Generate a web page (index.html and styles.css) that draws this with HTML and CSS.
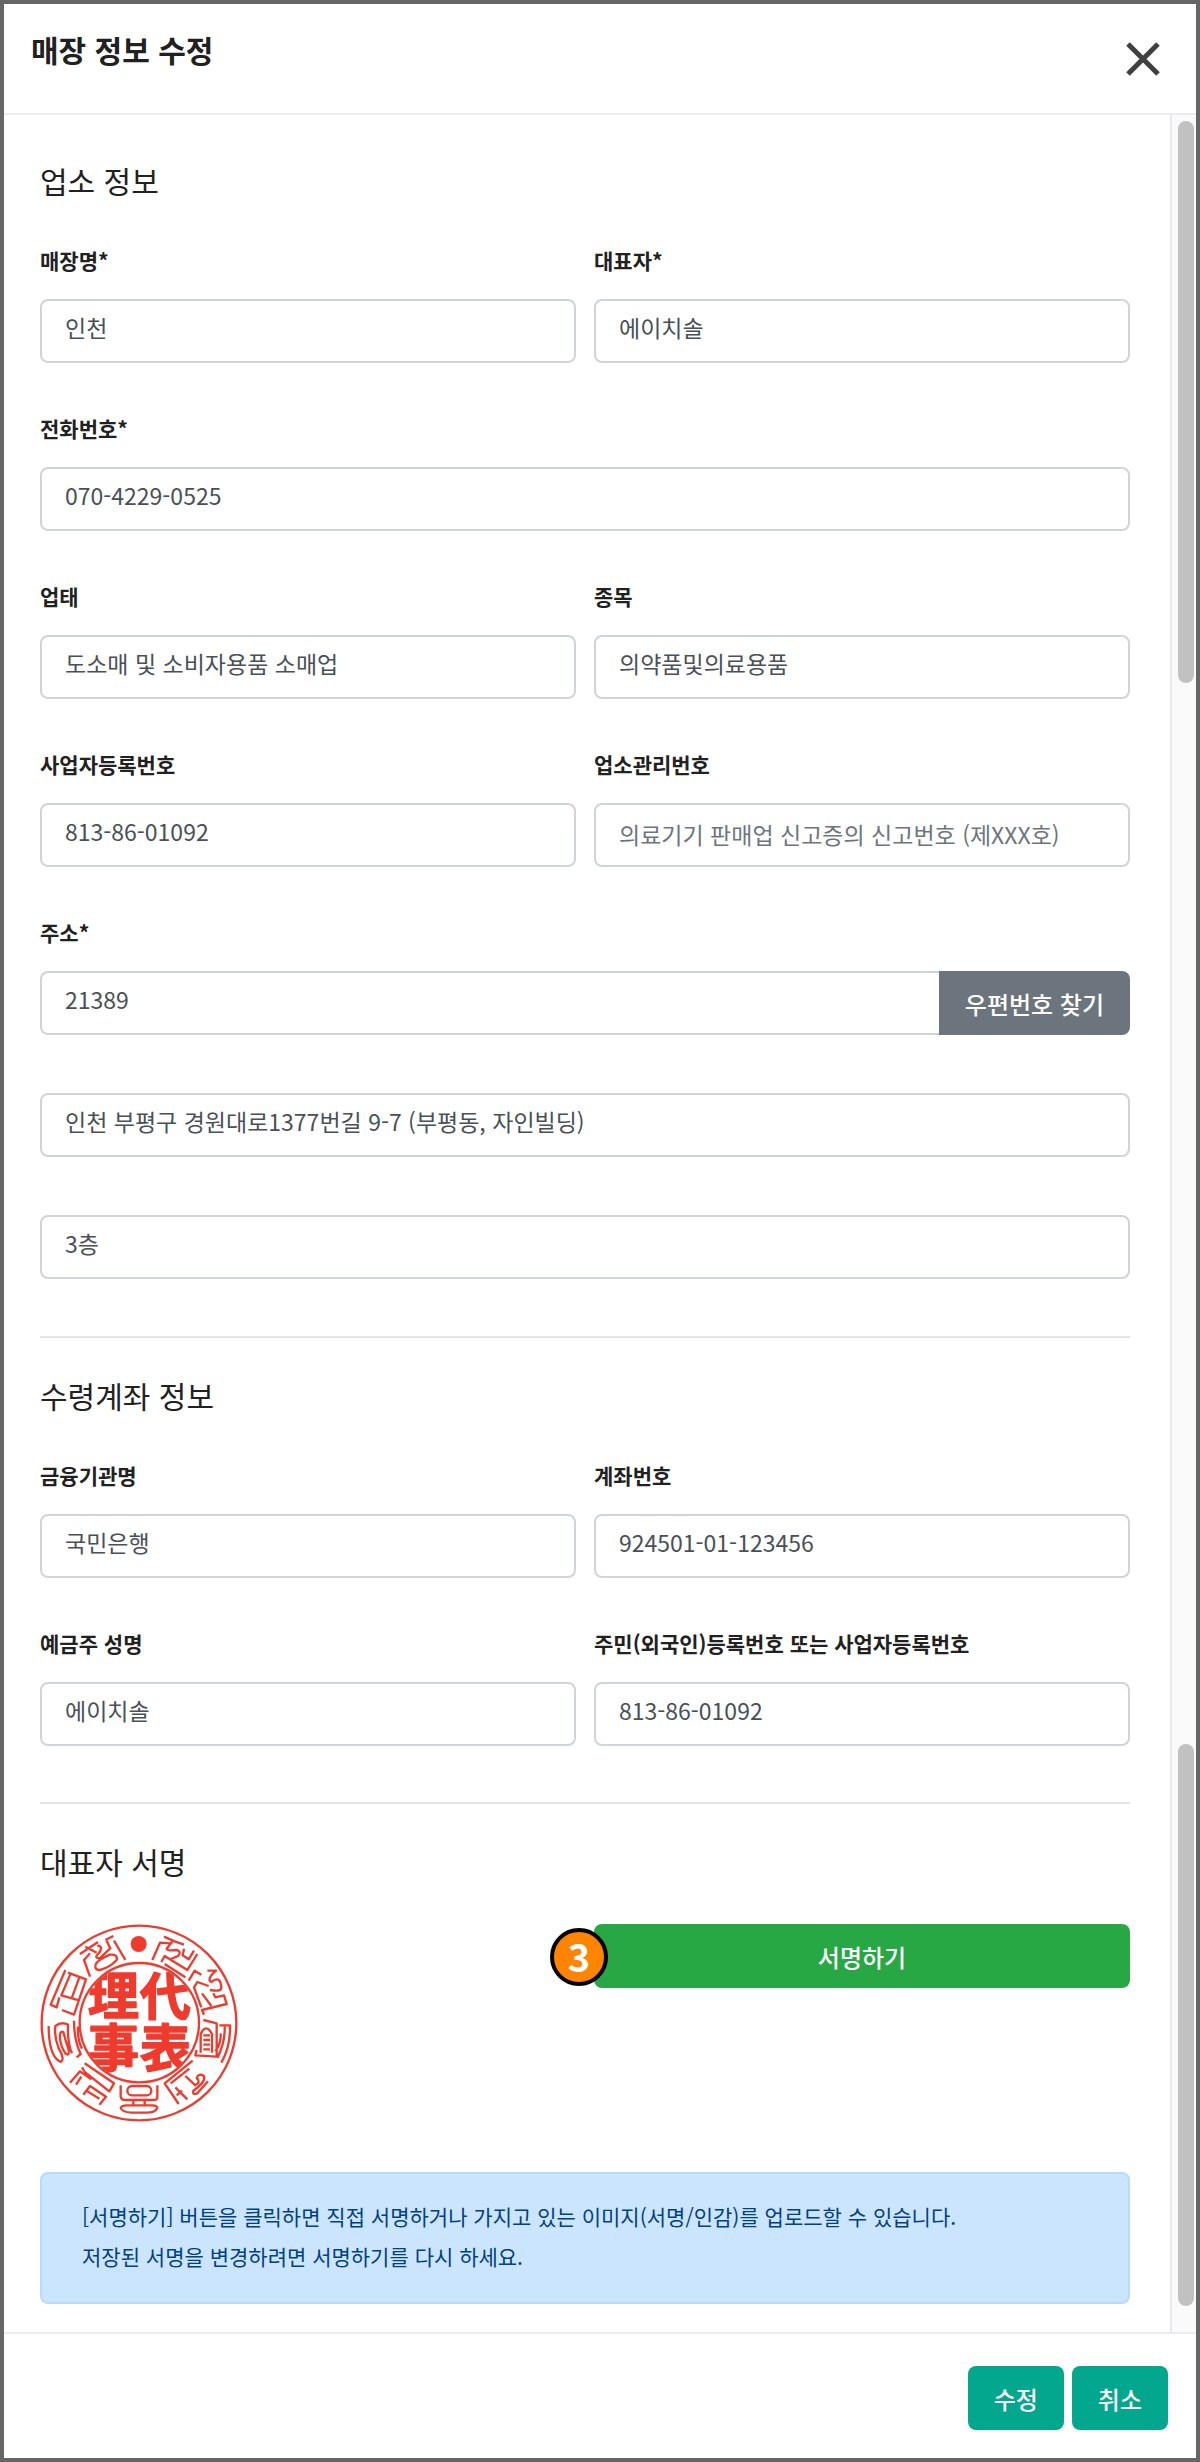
FILE: index.html
```html
<!DOCTYPE html>
<html lang="ko">
<head>
    <meta charset="UTF-8">
    <meta name="viewport" content="width=device-width, initial-scale=1.0">
    <title>매장 정보 수정</title>
    <link rel="stylesheet" href="styles.css">
</head>
<body>
    <form class="modal">
        <header class="modal-header">
            <h1>매장 정보 수정</h1>
            <button type="button" class="close" aria-label="닫기">
                <svg viewBox="0 0 34 34" width="34" height="34"><path d="M2 2L32 32M32 2L2 32"/></svg>
            </button>
        </header>

        <div class="modal-body">
            <div class="content">
                <section>
                    <h2>업소 정보</h2>
                    <div class="row">
                        <div class="field">
                            <label for="storeName">매장명*</label>
                            <input type="text" id="storeName" value="인천">
                        </div>
                        <div class="field">
                            <label for="owner">대표자*</label>
                            <input type="text" id="owner" value="에이치솔">
                        </div>
                    </div>
                    <div class="row">
                        <div class="field">
                            <label for="phone">전화번호*</label>
                            <input type="text" id="phone" value="070-4229-0525">
                        </div>
                    </div>
                    <div class="row">
                        <div class="field">
                            <label for="bizType">업태</label>
                            <input type="text" id="bizType" value="도소매 및 소비자용품 소매업">
                        </div>
                        <div class="field">
                            <label for="bizItem">종목</label>
                            <input type="text" id="bizItem" value="의약품및의료용품">
                        </div>
                    </div>
                    <div class="row">
                        <div class="field">
                            <label for="bizNo">사업자등록번호</label>
                            <input type="text" id="bizNo" value="813-86-01092">
                        </div>
                        <div class="field">
                            <label for="manageNo">업소관리번호</label>
                            <input type="text" id="manageNo" placeholder="의료기기 판매업 신고증의 신고번호 (제XXX호)">
                        </div>
                    </div>
                    <div class="address">
                        <div class="field">
                            <label for="zip">주소*</label>
                            <div class="input-group">
                                <input type="text" id="zip" value="21389">
                                <button type="button" class="btn btn-secondary">우편번호 찾기</button>
                            </div>
                        </div>
                        <input type="text" aria-label="기본 주소" value="인천 부평구 경원대로1377번길 9-7 (부평동, 자인빌딩)">
                        <input type="text" aria-label="상세 주소" value="3층">
                    </div>
                </section>

                <hr>

                <section>
                    <h2>수령계좌 정보</h2>
                    <div class="row">
                        <div class="field">
                            <label for="bank">금융기관명</label>
                            <input type="text" id="bank" value="국민은행">
                        </div>
                        <div class="field">
                            <label for="account">계좌번호</label>
                            <input type="text" id="account" value="924501-01-123456">
                        </div>
                    </div>
                    <div class="row">
                        <div class="field">
                            <label for="holder">예금주 성명</label>
                            <input type="text" id="holder" value="에이치솔">
                        </div>
                        <div class="field">
                            <label for="holderNo">주민(외국인)등록번호 또는 사업자등록번호</label>
                            <input type="text" id="holderNo" value="813-86-01092">
                        </div>
                    </div>
                </section>

                <hr>

                <section>
                    <h2>대표자 서명</h2>
                    <div class="row sign">
                        <svg class="seal" viewBox="120 132 594 594" role="img" aria-label="대표이사 인감">
                            <defs>
                                <clipPath id="inner"><circle cx="418" cy="428" r="176"/></clipPath>
                            </defs>
                            <circle cx="417" cy="429" r="292"/>
                            <circle cx="418" cy="428" r="179"/>
                            <circle class="dot" cx="416" cy="192" r="24"/>
                            <g clip-path="url(#inner)">
                                <text x="340" y="405">理</text>
                                <text x="496" y="405">代</text>
                                <text x="340" y="562">事</text>
                                <text x="496" y="562">表</text>
                            </g>
                            <!-- ring ornament, clockwise from the dot -->
                            <path d="M457 240L480 188L510 190M492 170L524 184L552 194M520 180L500 206Q504 214 530 210Q546 214 534 228L510 238M484 246L494 228L562 270L592 222M552 206L548 226L566 238L582 212M494 252L556 292"/>
                            <path d="M566 302L584 272L604 284M622 272L648 272Q618 298 634 306Q662 284 664 324Q664 336 630 330M604 382L582 322L592 306L626 318M606 340L634 378M612 404L606 390L680 372L672 346L646 352L640 340"/>
                            <path d="M610 420L650 430V530L586 526L590 510M602 518V462Q618 428 636 462V518M610 466H630M610 480H630M610 494H630M610 508H630M658 436H690Q692 500 664 548M674 440Q676 486 652 534M662 460Q664 490 646 514"/>
                            <path d="M578 542L494 610L536 672M568 566L512 610M526 622L562 658M530 646L546 632M556 588L586 616Q604 606 590 594Q596 578 612 588Q618 606 580 632Q576 646 592 640L624 604"/>
                            <path d="M362 616V650Q364 660 376 660H460Q472 660 472 650V616M400 662V676M434 662V676M380 676H456Q472 676 472 684Q466 698 440 698H394Q366 696 362 684Q364 676 380 676"/>
                            <rect x="382" y="618" width="72" height="28" rx="14"/>
                            <path d="M254 550L342 610L328 634L254 576L246 562M210 608L240 574L274 598M228 614L244 590M250 644L270 618L318 650L298 674M262 634L298 656"/>
                            <path d="M146 438Q146 530 182 546Q196 540 176 505Q162 470 166 438Q184 424 204 434Q202 490 216 520M180 474Q178 452 190 456Q196 480 206 510Q208 530 196 520Q182 500 180 474M222 422Q222 480 242 522L230 532M234 440Q232 480 246 506"/>
                            <path d="M196 270L152 374L170 382L178 352M212 280L184 346L240 362M204 278L258 298L222 404L186 390M238 292L216 352"/>
                            <path d="M270 290L252 240L270 220M240 222L294 186M256 200L290 218M292 196Q312 200 296 220Q280 236 300 234L330 206M286 256Q290 240 330 224Q354 222 350 240Q330 262 300 270Q284 270 286 256M316 180L340 168M320 182L332 208M342 182L376 240"/>
                        </svg>
                        <div class="sign-action">
                            <button type="button" class="btn btn-success">서명하기</button>
                            <span class="badge">3</span>
                        </div>
                    </div>
                    <div class="alert">
                        [서명하기] 버튼을 클릭하면 직접 서명하거나 가지고 있는 이미지(서명/인감)를 업로드할 수 있습니다.<br>
                        저장된 서명을 변경하려면 서명하기를 다시 하세요.
                    </div>
                </section>
            </div>
            <div class="track">
                <span class="thumb"></span>
                <span class="thumb"></span>
            </div>
        </div>

        <footer class="modal-footer">
            <button type="submit" class="btn btn-primary">수정</button>
            <button type="button" class="btn btn-primary">취소</button>
        </footer>
    </form>
</body>
</html>
```

FILE: styles.css
```css
* { box-sizing: border-box; }
body { margin: 0; color: #212121; background: #fff; }
body, input, button { font-family: "Noto Sans CJK KR", "Noto Sans", sans-serif; }

.modal { min-height: 100vh; border: 4px solid #666; display: flex; flex-direction: column; }
.modal-header { display: flex; justify-content: space-between; align-items: flex-start; padding: 25px 36px 37px 27px; border-bottom: 2px solid #ebebf0; }
.modal-body { display: flex; flex: 1; }
.modal-footer { display: flex; justify-content: flex-end; gap: 8px; padding: 32px 28px 28px; border-top: 2px solid #ebebf0; }

h1, h2 { margin: 0; font-size: 30px; line-height: 40px; }
h2 { font-weight: 400; margin-bottom: 45px; }

.close { margin-top: 13px; padding: 0; border: 0; background: none; line-height: 0; cursor: pointer; }
.close path { stroke: #404040; stroke-width: 5; }

.content { flex: 1; min-width: 0; padding: 45px 40px 28px 36px; }
.row { display: flex; gap: 18px; margin-bottom: 50px; }
.row:last-child { margin-bottom: 56px; }
.field { flex: 1; min-width: 0; }
label { display: block; font-size: 21px; font-weight: 700; line-height: 30px; margin-bottom: 24px; }

input { display: block; width: 100%; height: 64px; padding: 0 23px 8px; border: 2px solid #ced4da; border-radius: 8px; background: #fff; color: #495057; font-size: 23px; }
input:placeholder-shown { padding-bottom: 2px; }
input::placeholder { color: #6c757d; opacity: 1; }
.input-group { display: flex; }
.input-group input { flex: 1; min-width: 0; border-right: 0; border-radius: 8px 0 0 8px; }
.address { display: grid; gap: 58px; margin-bottom: 57px; }

.btn { height: 64px; padding: 0 26px; border: 0; border-radius: 8px; color: #fff; font-size: 24px; font-weight: 500; white-space: nowrap; cursor: pointer; }
.btn-secondary { background: #6c757d; border-radius: 0 8px 8px 0; }
.btn-success { width: 100%; background: #28a745; }
.btn-primary { background: #03a78d; }

hr { height: 2px; margin: 0 0 37px; border: 0; background: #e5e5e5; }

.sign { justify-content: space-between; align-items: flex-start; margin-bottom: 50px; }
h2:has(+ .sign) { margin-bottom: 43px; }
.seal { width: 198px; height: 198px; fill: none; stroke: #ef3b2d; stroke-width: 7; stroke-linejoin: round; }
.seal .dot { fill: #ef3b2d; stroke: none; }
.seal text { fill: #ef3b2d; stroke-width: 4; font-family: "Noto Sans CJK KR", sans-serif; font-size: 154px; font-weight: 700; text-anchor: middle; }
.sign-action { position: relative; width: calc(50% - 9px); }
.badge { position: absolute; top: 4px; left: -44px; width: 58px; height: 58px; border: 4px solid #000; border-radius: 50%; background: #ff8400; color: #fff; font-size: 38px; font-weight: 700; line-height: 48px; text-align: center; }

.alert { padding: 22px 40px 26px; border: 2px solid #b8daff; border-radius: 8px; background: #cce5ff; color: #004085; font-size: 21px; line-height: 40px; }

/* scrollbar strip on the right edge */
.track { display: flex; flex-direction: column; justify-content: space-between; width: 26px; padding: 6px 2px 26px 6px; border-left: 2px solid #e8e8e8; background: #fafafa; }
.thumb { height: 562px; border-radius: 8px; background: #c1c1c1; }
```
